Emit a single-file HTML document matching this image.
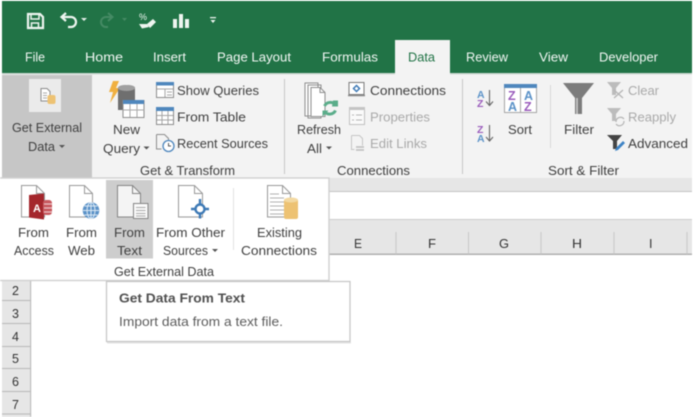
<!DOCTYPE html>
<html><head><meta charset="utf-8"><style>
html,body{margin:0;padding:0;background:#fff;width:694px;height:417px;overflow:hidden}
svg{display:block;filter:blur(.4px)}
text{font-family:"Liberation Sans",sans-serif;font-size:12.5px;fill:#444}
.w{fill:#f2f7f4}.d{fill:#a9a9a9}.k{fill:#3f3f3f}
</style></head><body>
<svg width="694" height="417" viewBox="0 0 694 417" xmlns="http://www.w3.org/2000/svg">
<rect width="694" height="417" fill="#fff"/>
<!-- title bar -->
<rect x="2" y="1" width="690" height="72" fill="#217346"/>
<rect x="2" y="73" width="690" height="105" fill="#f3f3f3"/>
<rect x="2" y="73" width="690" height="1.500" fill="#cfd9d3"/>
<rect x="395" y="40" width="55" height="35" fill="#f3f3f3"/>
<!-- QAT -->
<g fill="none" stroke="#eef5f0">
<path d="M28 14h12l3 3v11h-15z" stroke-width="2.200"/><path d="M31 14v5h8v-5M31.500 28v-5h7v5" stroke-width="1.500"/>
<path d="M62 17h9a5 5 0 0 1 0 10h-3M66 13l-4.500 4 4.500 4" stroke-width="2.200"/>
</g>
<path d="M112 17h-6a5 5 0 0 0 0 10h2M108 13l4.500 4-4.500 4" stroke-width="2" stroke="#458a64" fill="none"/>
<path d="M81 18h6l-3 3z" fill="#e5efe9"/><path d="M122 18h5l-2.500 3z" fill="#458a64"/>
<text x="139" y="20" style="font-size:9px;fill:#eef5f0" textLength="8" lengthAdjust="spacingAndGlyphs">%</text>
<path d="M139 24l8 0 2 3-7 1.500zM147 24l6-5 3 3-6 6z" fill="#eef5f0"/>
<path d="M173 19h4v9h-4zM179 14h4v14h-4zM185 19h4v9h-4z" fill="#eef5f0"/>
<path d="M210 17h6v1.200h-6zM210.500 20h5l-2.500 3z" fill="#eef5f0"/>
<!-- tabs -->
<g>
<text class="w" x="25" y="61.500" textLength="20" lengthAdjust="spacingAndGlyphs">File</text>
<text class="w" x="85" y="61.500" textLength="38" lengthAdjust="spacingAndGlyphs">Home</text>
<text class="w" x="153" y="61.500" textLength="33" lengthAdjust="spacingAndGlyphs">Insert</text>
<text class="w" x="217" y="61.500" textLength="74" lengthAdjust="spacingAndGlyphs">Page Layout</text>
<text class="w" x="322" y="61.500" textLength="56" lengthAdjust="spacingAndGlyphs">Formulas</text>
<text x="408" y="61.500" textLength="27" lengthAdjust="spacingAndGlyphs" style="fill:#217346">Data</text>
<text class="w" x="466" y="61.500" textLength="42" lengthAdjust="spacingAndGlyphs">Review</text>
<text class="w" x="539" y="61.500" textLength="29" lengthAdjust="spacingAndGlyphs">View</text>
<text class="w" x="599" y="61.500" textLength="59" lengthAdjust="spacingAndGlyphs">Developer</text>
</g>
<!-- Get External Data button -->
<rect x="2" y="75" width="90" height="103" fill="#c6c6c6"/>
<rect x="29" y="79" width="32" height="33" fill="#ebebeb"/>
<path d="M41 88.500h6l3 3v9.500h-9z" fill="#fff" stroke="#8a8a8a"/>
<path d="M43 93h4M43 95.500h4M43 98h4" stroke="#aaa"/>
<rect x="47.500" y="95" width="8" height="9" rx="2" fill="#edc273"/>
<text class="k" x="12" y="132" textLength="70" lengthAdjust="spacingAndGlyphs">Get External</text>
<text class="k" x="28" y="151" textLength="27" lengthAdjust="spacingAndGlyphs">Data</text>
<path d="M59 145h6l-3 3z" fill="#555"/>
<!-- New Query -->
<path d="M113 81h6l-3 7h4l-10 15 3-11h-4z" fill="#f0b040"/>
<path d="M118 88c0-4 17-4 17 0v22h-17z" fill="#6f6f6f"/><ellipse cx="126.500" cy="88" rx="8.500" ry="3" fill="#a0a0a0"/>
<rect x="123" y="100.500" width="21" height="17" fill="#fff" stroke="#8d8d8d"/><rect x="123" y="100" width="21" height="4" fill="#4f87bd"/>
<path d="M130 104v13M137 104v13M123 110h21" stroke="#a8a8a8" fill="none"/>
<text class="k" x="113" y="134" textLength="27" lengthAdjust="spacingAndGlyphs">New</text>
<text class="k" x="103" y="153" textLength="37" lengthAdjust="spacingAndGlyphs">Query</text>
<path d="M143.500 146.500h6l-3 3z" fill="#555"/>
<!-- small group icons -->
<rect x="156.500" y="82.500" width="17" height="15" fill="#fff" stroke="#8d8d8d"/><rect x="156" y="82" width="18" height="3.500" fill="#4f87bd"/>
<path d="M157 89h16M165 89v8M167 92h5M167 95h5" stroke="#a5a5a5" fill="none"/>
<rect x="156.500" y="107.500" width="17" height="17" fill="#fff" stroke="#8d8d8d"/><rect x="156" y="107" width="18" height="4" fill="#4f87bd"/>
<path d="M162 111v13M168 111v13M157 115.500h16M157 120h16" stroke="#a5a5a5" fill="none"/>
<path d="M156.500 134.500h8l4 4v8M156.500 134.500v14.500h5" fill="none" stroke="#8d8d8d"/>
<circle cx="168.500" cy="146" r="5.500" fill="#fff" stroke="#4f87bd" stroke-width="1.300"/><path d="M168.500 143v3h2.500" fill="none" stroke="#555"/>
<text class="k" x="177" y="95" textLength="82" lengthAdjust="spacingAndGlyphs">Show Queries</text>
<text class="k" x="177" y="121.500" textLength="69" lengthAdjust="spacingAndGlyphs">From Table</text>
<text class="k" x="177" y="148" textLength="91" lengthAdjust="spacingAndGlyphs">Recent Sources</text>
<text class="k" x="140" y="175" textLength="95" lengthAdjust="spacingAndGlyphs">Get &amp; Transform</text>
<rect x="284" y="79" width="1" height="95" fill="#c6c6c6"/>
<!-- Refresh -->
<path d="M305 83h13v33h-13zM308 85h13v33h-13z" fill="#fff" stroke="#8d8d8d"/>
<path d="M311 87.500h9l5 5v24h-14z" fill="#fff" stroke="#8d8d8d"/>
<path d="M320 87.500v5h5" fill="none" stroke="#8d8d8d"/>
<path d="M324.500 106a6.500 6.500 0 0 1 11-1M335.500 110.500a6.500 6.500 0 0 1-11 1" fill="none" stroke="#5aad8a" stroke-width="3"/>
<path d="M333 100.500h5v6h-6zM322.500 116.500v-6h6z" fill="#5aad8a"/>
<text class="k" x="297" y="134" textLength="44" lengthAdjust="spacingAndGlyphs">Refresh</text>
<text class="k" x="307" y="153" textLength="15" lengthAdjust="spacingAndGlyphs">All</text>
<path d="M326 146.500h6l-3 3z" fill="#555"/>
<!-- Connections -->
<rect x="349" y="82.500" width="15" height="12" fill="#fff" stroke="#7a7a7a"/>
<path d="M348 95.500h17" stroke="#888" stroke-width="1.400"/>
<path d="M356.500 85.500l3 3-3 3-3-3z" fill="none" stroke="#3d79b5" stroke-width="1.500"/>
<rect x="349.500" y="107.500" width="15" height="17" fill="#fafafa" stroke="#c0c0c0"/><rect x="349" y="107" width="16" height="3" fill="#c4c4c4"/>
<path d="M352 115h2M352 120h2M356 115h6M356 120h6" stroke="#b5b5b5" fill="none"/>
<path d="M351.500 135.500h8l3 3v7M351.500 135.500v14h3" fill="none" stroke="#c5c5c5"/>
<path d="M356 147h8M356 150h8" stroke="#bbb" stroke-width="1.500" fill="none"/>
<text class="k" x="370" y="95" textLength="76" lengthAdjust="spacingAndGlyphs">Connections</text>
<text class="d" x="370" y="121.500" textLength="60" lengthAdjust="spacingAndGlyphs">Properties</text>
<text class="d" x="370" y="148" textLength="57" lengthAdjust="spacingAndGlyphs">Edit Links</text>
<text class="k" x="337" y="175" textLength="73" lengthAdjust="spacingAndGlyphs">Connections</text>
<rect x="462" y="79" width="1" height="95" fill="#c6c6c6"/>
<!-- Sort -->
<text x="477" y="98" style="font-size:10.500px;font-weight:bold;fill:#5b92c8">A</text>
<text x="477" y="107" style="font-size:10.500px;font-weight:bold;fill:#9a5cbc">Z</text>
<text x="477" y="133" style="font-size:10.500px;font-weight:bold;fill:#9a5cbc">Z</text>
<text x="477" y="142" style="font-size:10.500px;font-weight:bold;fill:#5b92c8">A</text>
<path d="M489.500 90v15M486 101.500l3.500 4 3.500-4M489.500 125v16M486 137l3.500 4 3.500-4" fill="none" stroke="#666" stroke-width="1.100"/>
<rect x="504.500" y="85.500" width="32" height="27" fill="#fff" stroke="#a5a5a5"/><rect x="504" y="84" width="33" height="4" fill="#4f87bd"/>
<path d="M520.500 88v25" stroke="#a5a5a5"/>
<text x="508" y="100" style="font-size:12.500px;font-weight:bold;fill:#9a5cbc">Z</text>
<text x="508" y="111" style="font-size:12.500px;font-weight:bold;fill:#5b92c8">A</text>
<text x="524" y="100" style="font-size:12.500px;font-weight:bold;fill:#5b92c8">A</text>
<text x="524" y="111" style="font-size:12.500px;font-weight:bold;fill:#9a5cbc">Z</text>
<text class="k" x="508" y="134" textLength="24" lengthAdjust="spacingAndGlyphs">Sort</text>
<rect x="550" y="85" width="1" height="63" fill="#d8d8d8"/>
<!-- Filter -->
<path d="M563 83h31l-12 15v16h-7v-16z" fill="#7c7c7c"/><path d="M577 98v16" stroke="#cfcfcf" stroke-width="1.500"/>
<text class="k" x="564" y="134" textLength="30" lengthAdjust="spacingAndGlyphs">Filter</text>
<path d="M607 82h14l-5 6v7h-4v-7z" fill="#bcbcbc"/><path d="M614 90l9 8M623 90l-9 8" stroke="#b5b5b5" stroke-width="1.300"/>
<path d="M607 108h14l-5 6v7h-4v-7z" fill="#bcbcbc"/><path d="M616 122a4.500 4.500 0 0 1 8-3M624 121a4.500 4.500 0 0 1-8 3" fill="none" stroke="#b5b5b5" stroke-width="1.200"/>
<path d="M607 135h15l-5 6v8h-4v-8z" fill="#444"/><path d="M615 151l1-3 7-7 2 2-7 7z" fill="#3d83c5"/>
<text class="d" x="628" y="95" textLength="31" lengthAdjust="spacingAndGlyphs">Clear</text>
<text class="d" x="628" y="121.500" textLength="48" lengthAdjust="spacingAndGlyphs">Reapply</text>
<text class="k" x="628" y="148" textLength="60" lengthAdjust="spacingAndGlyphs">Advanced</text>
<text class="k" x="548" y="175" textLength="71" lengthAdjust="spacingAndGlyphs">Sort &amp; Filter</text>
<!-- sheet chrome -->
<rect x="2" y="178" width="690" height="14" fill="#e6e6e6"/>
<rect x="2" y="191" width="690" height="1" fill="#c4c4c4"/>
<rect x="2" y="219" width="690" height="35" fill="#e6e6e6"/>
<rect x="2" y="219" width="690" height="1" fill="#cdcdcd"/>
<rect x="2" y="253.500" width="690" height="1.500" fill="#b0b0b0"/>
<path d="M396 232v22M468.500 232v22M541 232v22M614 232v22M687 232v22" stroke="#c8c8c8"/>
<text x="354" y="248" textLength="8" lengthAdjust="spacingAndGlyphs" style="fill:#333">E</text>
<text x="428" y="248" textLength="8" lengthAdjust="spacingAndGlyphs" style="fill:#333">F</text>
<text x="499" y="248" textLength="10" lengthAdjust="spacingAndGlyphs" style="fill:#333">G</text>
<text x="572" y="248" textLength="10" lengthAdjust="spacingAndGlyphs" style="fill:#333">H</text>
<text x="649" y="248" style="fill:#333">I</text>
<rect x="2" y="254" width="29" height="163" fill="#e6e6e6"/>
<rect x="30" y="254" width="1.200" height="163" fill="#bdbdbd"/>
<path d="M2 300.500h29M2 323.500h29M2 346.500h29M2 368.500h29M2 391.500h29M2 414h29" stroke="#b8b8b8" fill="none"/>
<text x="12" y="295" style="fill:#333">2</text>
<text x="12" y="318" style="fill:#333">3</text>
<text x="12" y="341" style="fill:#333">4</text>
<text x="12" y="363" style="fill:#333">5</text>
<text x="12" y="386" style="fill:#333">6</text>
<text x="12" y="409" style="fill:#333">7</text>
<!-- popup -->
<rect x="-2" y="178" width="331" height="102.500" fill="#fff" stroke="#d0d0d0" stroke-width="1.400"/>
<rect x="106" y="180" width="47" height="78.500" fill="#cdcdcd"/>
<!-- access -->
<path d="M21.500 185.500h15l8 8v23.500h-23z" fill="#fff" stroke="#999"/><path d="M36.500 185.500v8h8" fill="none" stroke="#999"/>
<path d="M29 195l15-1.500v26l-15-2z" fill="#a4262c"/><rect x="43" y="200" width="9" height="15" rx="3" fill="#c85a60"/>
<path d="M44 204h8M44 208h8M44 212h8" stroke="#fff" stroke-width=".8"/>
<text x="33" y="212" style="font-size:11px;font-weight:bold;fill:#fff">A</text>
<!-- web -->
<path d="M69.500 185.500h15l8 8v23.500h-23z" fill="#fff" stroke="#999"/><path d="M84.500 185.500v8h8" fill="none" stroke="#999"/>
<circle cx="91" cy="210.500" r="8.300" fill="#5b92c8"/>
<path d="M83 210.500h16M91 202.500v16M84.500 206h13M84.500 215h13" stroke="#dce9f4" fill="none"/><ellipse cx="91" cy="210.500" rx="4" ry="8" fill="none" stroke="#dce9f4"/>
<!-- text -->
<path d="M117.500 185.500h15l8 8v23.500h-23z" fill="#f4f4f4" stroke="#858585"/><path d="M132.500 185.500v8h8" fill="none" stroke="#858585"/>
<rect x="133.500" y="203.500" width="14.500" height="15" fill="#fafafa" stroke="#858585"/>
<path d="M136 207.500h9.500M136 210.500h9.500M136 213.500h9.500M136 216h9.500" stroke="#aaa" fill="none"/>
<!-- other -->
<path d="M178.500 185.500h16l8 8v23.500h-24z" fill="#fff" stroke="#999"/><path d="M194.500 185.500v8h8" fill="none" stroke="#999"/>
<circle cx="200" cy="209" r="4.500" fill="#fff" stroke="#3d79b5" stroke-width="2.400"/>
<path d="M200 199v5.500M200 213.500v5M191 209h4.500M204.500 209h4.500" stroke="#3d79b5" stroke-width="2.400"/>
<!-- separator -->
<rect x="233" y="188" width="1" height="62" fill="#e2e2e2"/>
<!-- existing -->
<path d="M267.500 185.500h15l8 8v23.500h-23z" fill="#fff" stroke="#999"/><path d="M282.500 185.500v8h8" fill="none" stroke="#999"/>
<path d="M270 194h9M270 198h14M270 202h14M270 206h14M270 210h14M270 214h14" stroke="#b0b0b0" fill="none"/>
<rect x="284" y="199" width="14" height="20" rx="2" fill="#edc273"/><ellipse cx="291" cy="200" rx="7" ry="2.500" fill="#f3d9a2"/>
<!-- labels -->
<text class="k" x="18" y="237" textLength="31" lengthAdjust="spacingAndGlyphs">From</text>
<text class="k" x="14" y="255" textLength="40" lengthAdjust="spacingAndGlyphs">Access</text>
<text class="k" x="66" y="237" textLength="31" lengthAdjust="spacingAndGlyphs">From</text>
<text class="k" x="68" y="255" textLength="27" lengthAdjust="spacingAndGlyphs">Web</text>
<text class="k" x="114" y="237" textLength="31" lengthAdjust="spacingAndGlyphs">From</text>
<text class="k" x="117" y="255" textLength="25" lengthAdjust="spacingAndGlyphs">Text</text>
<text class="k" x="156" y="237" textLength="69" lengthAdjust="spacingAndGlyphs">From Other</text>
<text class="k" x="163" y="255" textLength="45" lengthAdjust="spacingAndGlyphs">Sources</text>
<path d="M212 249h6l-3 3z" fill="#555"/>
<text class="k" x="257" y="237" textLength="45" lengthAdjust="spacingAndGlyphs">Existing</text>
<text class="k" x="241" y="255" textLength="76" lengthAdjust="spacingAndGlyphs">Connections</text>
<text class="k" x="114" y="276" textLength="100" lengthAdjust="spacingAndGlyphs">Get External Data</text>
<!-- tooltip -->
<rect x="106.500" y="281.500" width="243.500" height="60" fill="#fff" stroke="#c4c4c4" stroke-width="1.200"/>
<rect x="107" y="342" width="244" height="1.500" fill="#e2e2e2"/>
<text x="119" y="302.500" textLength="126" lengthAdjust="spacingAndGlyphs" style="font-weight:bold;fill:#505050">Get Data From Text</text>
<text x="119" y="326" textLength="164" lengthAdjust="spacingAndGlyphs" style="fill:#5c5c5c">Import data from a text file.</text>
</svg>
</body></html>
